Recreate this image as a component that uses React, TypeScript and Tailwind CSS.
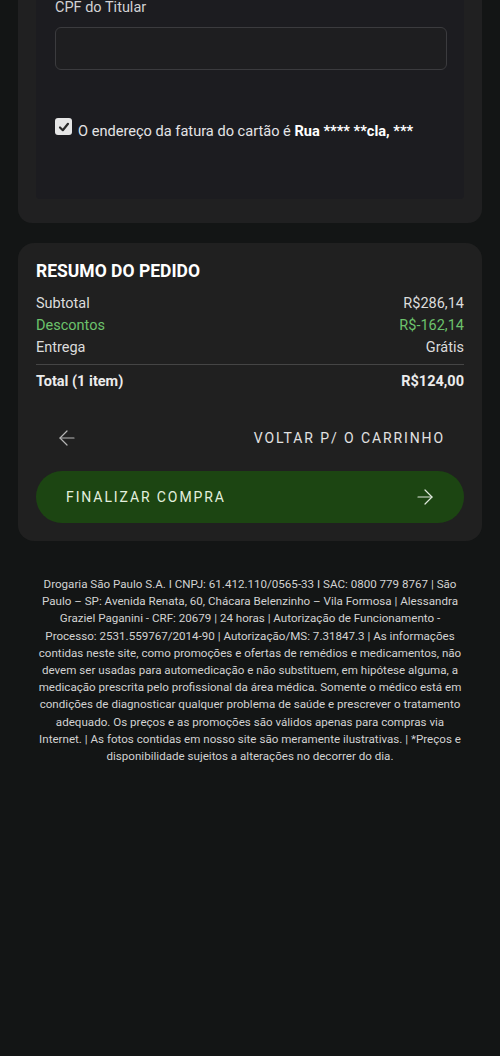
import { ArrowLeft, ArrowRight } from 'lucide-react';

// Order summary rows
const rows = [
  { label: 'Subtotal', value: 'R$286,14', green: false },
  { label: 'Descontos', value: 'R$-162,14', green: true },
  { label: 'Entrega', value: 'Grátis', green: false },
];

// Footer legal text, broken as on the page
const legalLines = [
  'Drogaria São Paulo S.A. I CNPJ: 61.412.110/0565-33 I SAC: 0800 779 8767 | São',
  'Paulo – SP: Avenida Renata, 60, Chácara Belenzinho – Vila Formosa | Alessandra',
  'Graziel Paganini - CRF: 20679 | 24 horas | Autorização de Funcionamento -',
  'Processo: 2531.559767/2014-90 | Autorização/MS: 7.31847.3 | As informações',
  'contidas neste site, como promoções e ofertas de remédios e medicamentos, não',
  'devem ser usadas para automedicação e não substituem, em hipótese alguma, a',
  'medicação prescrita pelo profissional da área médica. Somente o médico está em',
  'condições de diagnosticar qualquer problema de saúde e prescrever o tratamento',
  'adequado. Os preços e as promoções são válidos apenas para compras via',
  'Internet. | As fotos contidas em nosso site são meramente ilustrativas. | *Preços e',
  'disponibilidade sujeitos a alterações no decorrer do dia.',
];

export default function App() {
  return (
    <div
      className="min-h-[1056px] bg-[#131515] text-[#dedede] overflow-hidden"
      style={{ fontFamily: 'Roboto, "Noto Sans", sans-serif' }}
    >
      {/* Payment card (top cut off) */}
      <div className="mx-[18px] rounded-b-[14px] bg-[#202021] px-[18px] pb-[24px]">
        <div className="rounded-b-[4px] bg-[#1c1c20] pl-[19px] pr-[17px] pb-[58px]">
          <label className="block text-[14.5px] leading-[15px] text-[#d2d2d4]">CPF do Titular</label>
          <input
            type="text"
            className="mt-[12px] block h-[43px] w-full rounded-[6px] border border-[#3b3b3e] bg-[#1e1e20] outline-none"
          />
          <div className="mt-[47px] flex items-start gap-[6px]">
            <span className="mt-[1px] flex h-[17px] w-[17px] shrink-0 items-center justify-center rounded-[3px] bg-[#e6e6e6]">
              <svg width="12" height="12" viewBox="0 0 12 12">
                <path d="M2 6.5 L4.8 9.2 L10 2.8" fill="none" stroke="#2a2a2a" strokeWidth="2.2" strokeLinecap="round" strokeLinejoin="round" />
              </svg>
            </span>
            <p className="mt-[4px] text-[14.6px] leading-[20px] text-[#e4e4e6]">
              O endereço da fatura do cartão é <span className="font-bold text-white">Rua **** **cla, ***</span>
            </p>
          </div>
        </div>
      </div>

      {/* Order summary */}
      <div className="mx-[18px] mt-[20px] rounded-[16px] bg-[#202020] px-[18px] pt-[18px] pb-[18px]">
        <h2 className="text-[17.5px] font-bold leading-[20px] text-white">RESUMO DO PEDIDO</h2>
        <div className="mt-[12px]">
          {rows.map((row) => (
            <div
              key={row.label}
              className={`flex justify-between text-[14.5px] leading-[22px] ${row.green ? 'text-[#6cc26c]' : 'text-[#dcdcdc]'}`}
            >
              <span>{row.label}</span>
              <span>{row.value}</span>
            </div>
          ))}
        </div>
        <div className="mt-[5px] h-px bg-[#454545]" />
        <div className="mt-[6px] flex justify-between text-[14.5px] font-bold leading-[22px] text-[#ececec]">
          <span>Total (1 item)</span>
          <span>R$124,00</span>
        </div>

        <div className="mt-[29px] flex h-[32px] items-center justify-between pl-[19px] pr-[19px]">
          <ArrowLeft size={24} strokeWidth={1.2} className="text-[#b5b5b5]" />
          <span className="text-[14px] tracking-[1.9px] text-[#e2e2e2]">VOLTAR P/ O CARRINHO</span>
        </div>

        <button className="mt-[17px] flex h-[52px] w-full items-center justify-between rounded-full bg-[#1c4512] pl-[30px] pr-[27px]">
          <span className="text-[14px] tracking-[1.9px] text-[#e3f0df]">FINALIZAR COMPRA</span>
          <ArrowRight size={24} strokeWidth={1.2} className="text-[#dfe8dc]" />
        </button>
      </div>

      {/* Footer legal text */}
      <p className="mx-auto mt-[35px] w-[460px] text-center text-[11.6px] leading-[17.2px] text-[#d2d2d2]">
        {legalLines.map((line, i) => (
          <span key={i}>
            {line}
            {i < legalLines.length - 1 && <br />}
          </span>
        ))}
      </p>
    </div>
  );
}
